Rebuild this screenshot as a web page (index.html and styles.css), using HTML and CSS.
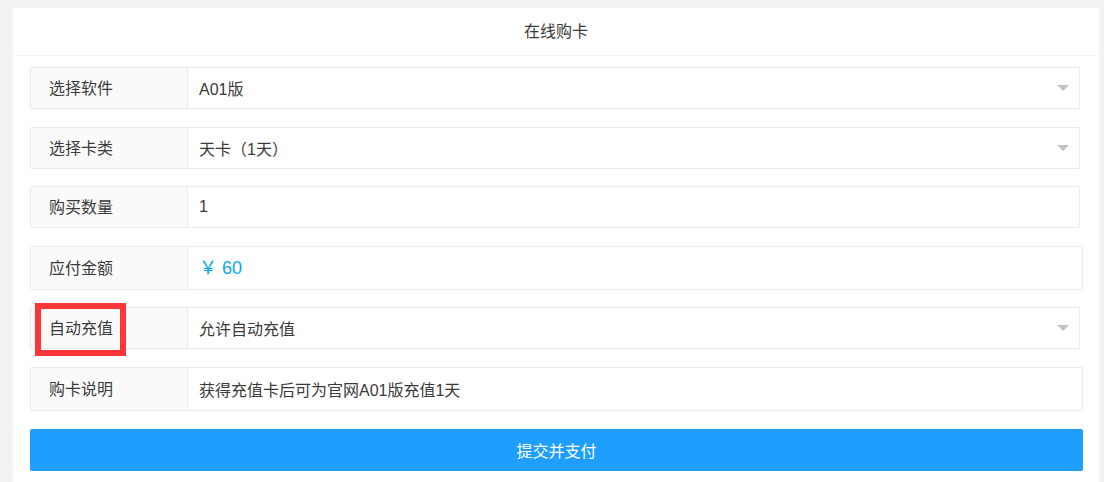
FILE: index.html
```html
<!DOCTYPE html>
<html lang="zh-CN">

<head>
  <meta charset="UTF-8">
  <meta name="viewport" content="width=device-width, initial-scale=1.0">
  <title>在线购卡</title>
  <link rel="stylesheet" href="styles.css">
</head>

<body>
  <div class="card">
    <div class="card-header">在线购卡</div>

    <div class="card-body">
      <div class="form-row form-select">
        <div class="form-label">选择软件</div>
        <div class="form-value">A01版<i class="caret"></i></div>
      </div>

      <div class="form-row form-select">
        <div class="form-label">选择卡类</div>
        <div class="form-value">天卡（1天）<i class="caret"></i></div>
      </div>

      <div class="form-row form-select">
        <div class="form-label">购买数量</div>
        <div class="form-value">1</div>
      </div>

      <div class="form-row form-text">
        <div class="form-label">应付金额</div>
        <div class="form-value price">￥ 60</div>
      </div>

      <div class="form-row form-select marked">
        <div class="form-label">自动充值</div>
        <div class="form-value">允许自动充值<i class="caret"></i></div>
        <span class="mark-box"></span>
      </div>

      <div class="form-row form-text">
        <div class="form-label">购卡说明</div>
        <div class="form-value">获得充值卡后可为官网A01版充值1天</div>
      </div>

      <button class="btn-submit">提交并支付</button>
    </div>
  </div>
</body>

</html>
```

FILE: styles.css
```css
body {
  margin: 0;
  background: #f2f2f2;
  font-family: "Liberation Sans", "Noto Sans CJK SC", sans-serif;
  font-size: 16px;
  color: #3a3a3a;
}

.card {
  margin: 8px 5px 0 13px;
  background: #fff;
  border-radius: 2px;
}

.card-header {
  height: 47px;
  line-height: 47px;
  text-align: center;
  border-bottom: 1px solid #f3f3f3;
}

.card-body {
  padding: 11px 16px 30px 17px;
}

.form-row {
  position: relative;
  display: flex;
  box-sizing: border-box;
  height: 42px;
  margin-bottom: 17.6px;
  border: 1px solid #ebebeb;
  border-radius: 2px;
}

.form-select {
  margin-right: 3px;
}

.form-text {
  height: 44px;
}

.form-label {
  display: flex;
  align-items: center;
  box-sizing: border-box;
  width: 157px;
  padding: 0 0 2px 18px;
  background: #fafafa;
  border-right: 1px solid #ebebeb;
}

.form-value {
  display: flex;
  align-items: center;
  flex: 1;
  padding-left: 11px;
}

.price {
  color: #01aaed;
  font-size: 18px;
  padding-bottom: 3px;
}

.caret {
  position: absolute;
  right: 10px;
  top: 50%;
  margin-top: -3px;
  width: 0;
  height: 0;
  border-width: 6px;
  border-style: solid;
  border-color: #c2c2c2 transparent transparent;
  border-bottom-width: 0;
}

.mark-box {
  position: absolute;
  left: 4px;
  top: -5px;
  width: 91px;
  height: 53px;
  box-sizing: border-box;
  border: 6px solid #fb3638;
}

.btn-submit {
  display: block;
  width: 100%;
  height: 42px;
  border: none;
  border-radius: 2px;
  background: #1e9fff;
  color: #fff;
  font-family: inherit;
  font-size: 16px;
}
```
